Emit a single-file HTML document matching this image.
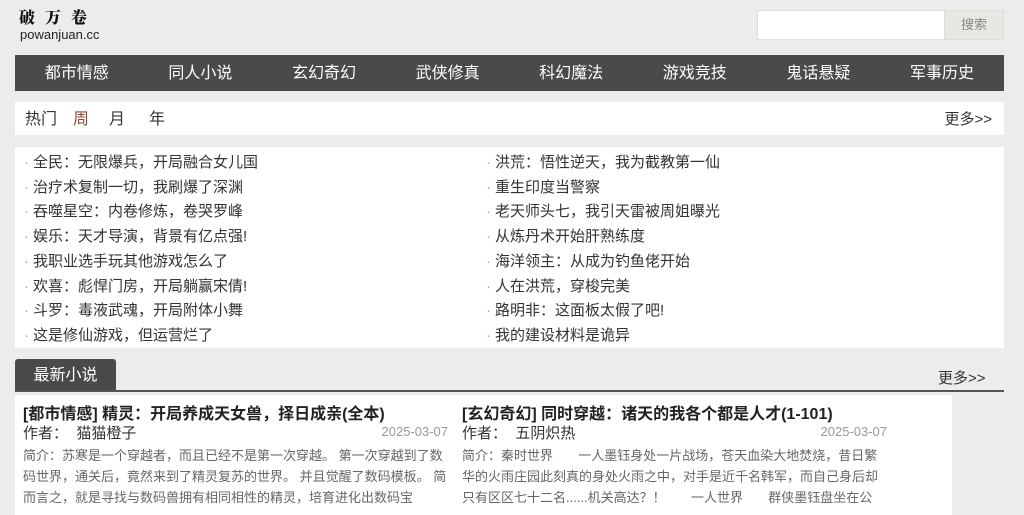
<!DOCTYPE html>
<html><head><meta charset="utf-8"><style>
*{margin:0;padding:0;box-sizing:border-box}
body{width:1024px;height:515px;overflow:hidden;background:#ececec;font-family:"Liberation Sans","Noto Sans CJK SC",sans-serif;color:#333;position:relative}
.abs{position:absolute}
.logo{left:19px;top:5px;font-family:"Noto Serif CJK SC",serif;font-weight:900;font-size:16px;letter-spacing:10px;color:#111}
.dom{left:20px;top:27px;font-size:13px;color:#222}
.search{left:757px;top:10px;width:188px;height:30px;background:#fff;border:1px solid #ddd}
.sbtn{left:944px;top:10px;width:60px;height:30px;background:#e8e8e2;border:1px solid #ddd;font-size:13px;color:#888;text-align:center;line-height:28px}
.nav{left:15px;top:55px;width:989px;height:36px;background:#4a4a4a;display:flex}
.nav span{width:123.6px;text-align:center;color:#fff;font-size:16px;line-height:38px}
.hot{left:15px;top:102px;width:989px;height:33px;background:#fff;font-size:16px;line-height:36px}
.list{left:15px;top:147px;width:989px;height:201px;background:#fff;font-size:15px;color:#333}
.col{position:absolute;top:4px;line-height:24.7px}
.col div:before{content:"·";color:#aaa;margin-right:4px}
.tab{left:15px;top:359px;width:101px;height:32px;background:#4a4a4a;color:#fff;font-size:16px;line-height:34px;text-align:center;border-radius:3px 3px 0 0}
.line{left:15px;top:390px;width:989px;height:2px;background:#555}
.more{font-size:15px;color:#333}
.items{left:15px;top:395px;width:937px;height:120px;background:#fff}
.it{position:absolute;top:0;width:425px}
.t{font-size:16px;font-weight:bold;color:#222;margin-top:5px;height:22px}
.a{font-size:15px;color:#333;height:22px;position:relative}
.a b{position:absolute;right:0;top:2px;font-weight:normal;font-size:13px;color:#999}
.d{font-size:13px;color:#666;line-height:21px;height:63px;overflow:hidden;margin-top:1px}
</style></head><body>
<div class="abs logo">破万卷</div>
<div class="abs dom">powanjuan.cc</div>
<div class="abs search"></div>
<div class="abs sbtn">搜索</div>
<div class="abs nav"><span>都市情感</span><span>同人小说</span><span>玄幻奇幻</span><span>武侠修真</span><span>科幻魔法</span><span>游戏竞技</span><span>鬼话悬疑</span><span>军事历史</span></div>
<div class="abs hot"><span style="margin-left:10px">热门</span><span style="margin-left:16px;color:#8a4a3a">周</span><span style="margin-left:20px">月</span><span style="margin-left:24px">年</span><span class="more" style="position:absolute;right:12px">更多&gt;&gt;</span></div>
<div class="abs list">
<div class="col" style="left:9px"><div>全民：无限爆兵，开局融合女儿国</div><div>治疗术复制一切，我刷爆了深渊</div><div>吞噬星空：内卷修炼，卷哭罗峰</div><div>娱乐：天才导演，背景有亿点强!</div><div>我职业选手玩其他游戏怎么了</div><div>欢喜：彪悍门房，开局躺赢宋倩!</div><div>斗罗：毒液武魂，开局附体小舞</div><div>这是修仙游戏，但运营烂了</div></div>
<div class="col" style="left:471px"><div>洪荒：悟性逆天，我为截教第一仙</div><div>重生印度当警察</div><div>老天师头七，我引天雷被周姐曝光</div><div>从炼丹术开始肝熟练度</div><div>海洋领主：从成为钓鱼佬开始</div><div>人在洪荒，穿梭完美</div><div>路明非：这面板太假了吧!</div><div>我的建设材料是诡异</div></div>
</div>
<div class="abs tab">最新小说</div>
<div class="abs more" style="left:938px;top:367px">更多&gt;&gt;</div>
<div class="abs line"></div>
<div class="abs items">
<div class="it" style="left:8px"><div class="t">[都市情感] 精灵：开局养成天女兽，择日成亲(全本)</div><div class="a">作者：&nbsp; 猫猫橙子<b>2025-03-07</b></div><div class="d">简介：苏寒是一个穿越者，而且已经不是第一次穿越。 第一次穿越到了数码世界，通关后，竟然来到了精灵复苏的世界。 并且觉醒了数码模板。 简而言之，就是寻找与数码兽拥有相同相性的精灵，培育进化出数码宝贝。...</div></div>
<div class="it" style="left:447px"><div class="t">[玄幻奇幻] 同时穿越：诸天的我各个都是人才(1-101)</div><div class="a">作者：&nbsp; 五阴炽热<b>2025-03-07</b></div><div class="d">简介：秦时世界 &nbsp; &nbsp; &nbsp; 一人墨钰身处一片战场，苍天血染大地焚烧，昔日繁华的火雨庄园此刻真的身处火雨之中，对手是近千名韩军，而自己身后却只有区区七十二名......机关高达？！ &nbsp; &nbsp; &nbsp; 一人世界 &nbsp; &nbsp; &nbsp; 群侠墨钰盘坐在公园...</div></div>
</div>
</body></html>
